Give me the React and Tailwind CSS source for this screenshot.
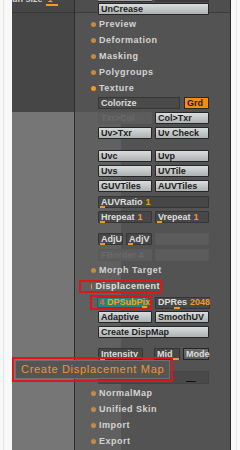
import React from 'react';

const font = "font-['Liberation_Sans',Arial,sans-serif]";

const Dot = ({ bright }) => (
  <span className={`w-[5px] h-[5px] rounded-full ${bright ? 'bg-[#f7961f]' : 'bg-[#c98a3e]'}`} />
);

const Item = ({ label, bright }) => (
  <div className="h-[16px] flex items-center pl-[16px] gap-[3px]">
    <Dot bright={bright} />
    <span className="text-[9px] font-bold tracking-[0.5px] text-[#d4d4d4] leading-none">{label}</span>
  </div>
);

const Btn = ({ children, w = 'w-[54px]' }) => (
  <div className={`${w} h-[12px] flex items-center pl-[2px] border border-[#262626] rounded-[1px] bg-gradient-to-b from-[#dadddd] to-[#adb1b1] text-[9px] font-bold leading-none text-[#1c1c1c] whitespace-nowrap overflow-hidden`}>
    {children}
  </div>
);

const Ghost = ({ children, w = 'w-[54px]' }) => (
  <div className={`${w} h-[12px] flex items-center pl-[2px] border border-[#5a5a5a] bg-[#5c5c5c] text-[9px] font-bold leading-none text-[#6a6a6a] whitespace-nowrap overflow-hidden`}>
    {children}
  </div>
);

const Slider = ({ label, value, w = 'w-[54px]' }) => (
  <div className={`${w} relative h-[12px] flex items-center pl-[2px] border border-[#363636] rounded-[1px] bg-[#474747] text-[9px] font-bold leading-none text-[#dedede] whitespace-nowrap`}>
    {label} <span className="ml-[3px] text-[#f29a22]">{value}</span>
    <span className="absolute left-[1px] bottom-[-1px] w-[5px] h-[2px] bg-[#f29a22]" />
  </div>
);

const Row = ({ children, mt }) => (
  <div className={`flex gap-[3px] pl-[23px] ${mt}`}>{children}</div>
);

export default function App() {
  return (
    <div className={`w-[240px] h-[450px] flex bg-white overflow-hidden relative ${font}`}>
      {/* left white margin */}
      <div className="w-[12px] bg-[#f8f8f8] flex">
        <div className="ml-[3px] w-px bg-[#e4e4e4]" />
      </div>

      {/* left panel */}
      <div className="w-[62px] flex flex-col">
        <div className="h-[112px] bg-[#464646] flex flex-col">
          <div className="h-[13px] border-b border-[#363636] flex items-start gap-[5px] overflow-hidden">
            <span className="mt-[-5px] text-[9px] font-bold text-[#cfcfcf] leading-none">un size</span>
            <span className="relative mt-[-5px] text-[9px] font-bold text-[#f29a22] leading-none">
              1
              <span className="absolute left-[-2px] top-[9px] w-[12px] h-[2px] bg-[#f29a22]" />
            </span>
          </div>
        </div>
        <div className="flex-1 bg-[#767676]" />
      </div>

      <div className="w-px bg-[#2e2e2e]" />

      {/* right panel */}
      <div className="w-[155px] relative bg-[#535353] flex flex-col">
        <div className="absolute left-0 top-[112px] w-[46px] bottom-0 bg-[#606060]" />
        <div className="relative flex flex-col">
          <div className="h-[13px] border-b border-[#3a3a3a] bg-[#4e4e4e] flex gap-[3px] pl-[23px]">
            <div className="w-[54px] h-[2px] bg-[#9ea2a2] border-b border-[#2a2a2a]" />
            <div className="w-[54px] h-[2px] bg-[#3a3a3a]" />
          </div>
          <div className="mt-[-10px] pl-[23px]">
            <Btn w="w-[111px]">UnCrease</Btn>
          </div>
          <div className="mt-[1px]">
            <Item label="Preview" />
            <Item label="Deformation" />
            <Item label="Masking" />
            <Item label="Polygroups" />
            <Item label="Texture" bright />
          </div>
          <Row mt="mt-[1px]">
            <div className="w-[82px] h-[12px] flex items-center pl-[2px] border border-[#363636] bg-[#4a4a4a] text-[9px] font-bold leading-none text-[#dadada]">Colorize</div>
            <div className="ml-[1px] w-[25px] h-[12px] flex items-center pl-[2px] border border-[#2a2a2a] bg-[#f28d12] text-[9px] font-bold leading-none text-[#2a1a08]">Grd</div>
          </Row>
          <Row mt="mt-[3px]">
            <Ghost>Txr&gt;Col</Ghost>
            <Btn>Col&gt;Txr</Btn>
          </Row>
          <Row mt="mt-[3px]">
            <Btn>Uv&gt;Txr</Btn>
            <Btn>Uv Check</Btn>
          </Row>
          <Row mt="mt-[11px]">
            <Btn>Uvc</Btn>
            <Btn>Uvp</Btn>
          </Row>
          <Row mt="mt-[3px]">
            <Btn>Uvs</Btn>
            <Btn>UVTile</Btn>
          </Row>
          <Row mt="mt-[3px]">
            <Btn>GUVTiles</Btn>
            <Btn>AUVTiles</Btn>
          </Row>
          <Row mt="mt-[4px]">
            <Slider label="AUVRatio" value="1" w="w-[111px]" />
          </Row>
          <Row mt="mt-[3px]">
            <Slider label="Hrepeat" value="1" />
            <Slider label="Vrepeat" value="1" />
          </Row>
          <Row mt="mt-[10px]">
            <Slider label="AdjU" value="" w="w-[25px]" />
            <Slider label="AdjV" value="" w="w-[26px]" />
            <Ghost />
          </Row>
          <Row mt="mt-[4px]">
            <Ghost>FBorder 4</Ghost>
            <Ghost />
          </Row>
          <div className="mt-[1px]">
            <Item label="Morph Target" />
            <div className="h-[16px] flex items-center pl-[4px]">
              <div className="h-[13px] w-[83px] border-2 border-[#e0151a] flex items-center pl-[10px] gap-[3px]">
                <Dot bright />
                <span className="text-[9px] font-bold tracking-[0.5px] text-[#e0e0e0] leading-none">Displacement</span>
              </div>
            </div>
          </div>
          <div className="mt-[1px] flex gap-[3px] pl-[15px] items-center">
            <div className="w-[62px] h-[15px] border-2 border-[#e0151a] flex items-center pl-[5px]">
              <div className="relative w-[52px] h-[11px] flex items-center pl-[1px] bg-[#1f8585] border border-[#176262] text-[9px] font-bold leading-none whitespace-nowrap">
                <span className="text-[#ff5a1e]">4</span>
                <span className="ml-[3px] text-[#f5a21f]">DPSubPix</span>
                <span className="absolute right-[1px] bottom-[-1px] w-[5px] h-[2px] bg-[#f29a22]" />
              </div>
            </div>
            <div className="relative w-[55px] h-[12px] flex items-center pl-[2px] border border-[#363636] bg-[#474747] text-[9px] font-bold leading-none text-[#dedede] whitespace-nowrap">
              DPRes <span className="ml-[3px] text-[#f29a22]">2048</span>
              <span className="absolute left-[18px] bottom-[-1px] w-[6px] h-[2px] bg-[#f29a22]" />
            </div>
          </div>
          <Row mt="mt-[1px]">
            <Btn>Adaptive</Btn>
            <Btn>SmoothUV</Btn>
          </Row>
          <Row mt="mt-[3px]">
            <Btn w="w-[111px]">Create DispMap</Btn>
          </Row>
          <Row mt="mt-[10px]">
            <Slider label="Intensity" value="" w="w-[45px]" />
            <div className="ml-[8px] relative w-[26px] h-[12px] flex items-center pl-[2px] border border-[#363636] bg-[#474747] text-[9px] font-bold leading-none text-[#dedede]">
              Mid
              <span className="absolute right-[0px] bottom-[-1px] w-[8px] h-[2px] bg-[#f29a22]" />
            </div>
            <div className="w-[26px] h-[12px] flex items-center pl-[2px] border border-[#262626] bg-gradient-to-b from-[#6a6a6a] to-[#5a5a5a] text-[9px] font-bold leading-none text-[#dcdcdc]">Mode</div>
          </Row>
          <Row mt="mt-[11px]">
            <div className="relative w-[111px] h-[13px] bg-[#4a4a4a] border border-[#444]">
              <span className="absolute left-[87px] bottom-[1px] w-[10px] h-px bg-[#111]" />
            </div>
          </Row>
          <div className="mt-[1px]">
            <Item label="NormalMap" />
            <Item label="Unified Skin" />
            <Item label="Import" />
            <Item label="Export" />
          </div>
        </div>
      </div>

      <div className="w-px bg-[#2c2c2c]" />
      <div className="flex-1 bg-[#f8f8f8] flex">
        <div className="ml-[5px] w-px bg-[#e6e6e6]" />
      </div>

      {/* tooltip */}
      <div className="absolute left-[12px] top-[357px] w-[161px] h-[25px] border-2 border-[#e0151a] p-px">
        <div className="h-full bg-[#555555] border border-[#707070] flex items-center pl-[5px]">
          <span className="text-[11px] tracking-[0.7px] text-[#f0962a] leading-none whitespace-nowrap">Create Displacement Map</span>
        </div>
      </div>
    </div>
  );
}
